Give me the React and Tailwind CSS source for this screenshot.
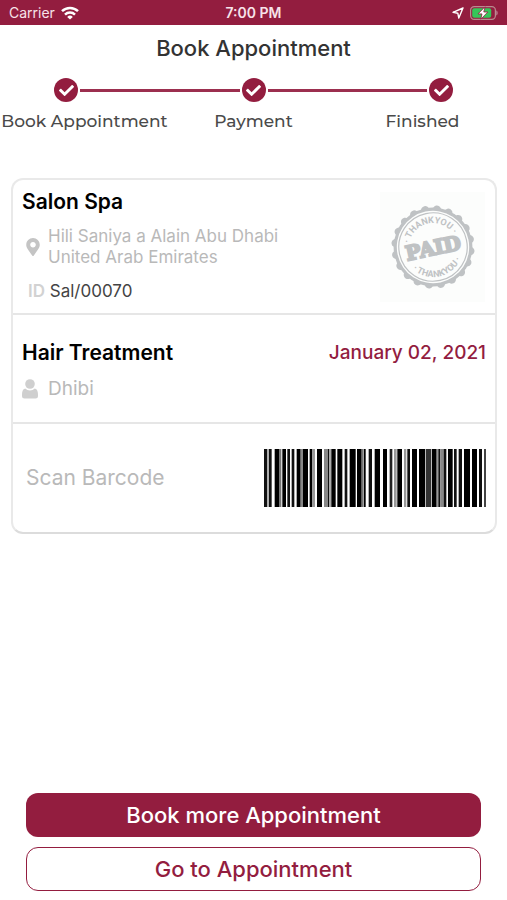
import { Fragment } from 'react'
import { FaCheck, FaMapMarkerAlt } from 'react-icons/fa'

const STEPS = ['Book Appointment', 'Payment', 'Finished']

// [x, width, fill]
const BARS = [
  [0, 10, '#111'], [14, 9, '#111'], [32, 13, '#000'], [45, 7, '#777'], [55, 11, '#000'],
  [70, 8, '#111'], [83, 8, '#111'], [98, 12, '#000'], [110, 7, '#888'], [117, 15, '#000'],
  [137, 8, '#000'], [145, 8, '#999'], [159, 15, '#000'], [180, 12, '#888'], [192, 4, '#111'],
  [196, 6, '#aaa'], [202, 13, '#000'], [220, 15, '#000'], [242, 8, '#111'], [257, 18, '#000'],
  [279, 14, '#000'], [293, 6, '#777'], [300, 5, '#000'], [314, 10, '#111'], [332, 16, '#000'],
  [357, 12, '#000'], [377, 8, '#222'], [390, 8, '#999'], [400, 14, '#000'], [420, 7, '#999'],
  [430, 8, '#111'], [444, 15, '#000'], [465, 18, '#000'], [485, 17, '#333'], [504, 14, '#000'],
  [518, 5, '#999'], [523, 6, '#111'], [529, 10, '#888'], [539, 8, '#111'], [552, 14, '#000'],
  [570, 8, '#111'], [584, 10, '#111'], [600, 18, '#000'], [624, 15, '#000'], [645, 9, '#111'],
  [660, 6, '#444'],
]

function StatusBar() {
  return (
    <div className="h-[25px] px-[9px] bg-[#931d3f] text-[#f7e3e9] grid grid-cols-3 items-center">
      <div className="flex items-center gap-1.5 text-sm">
        <span>Carrier</span>
        <svg className="w-[18px] h-[14px]" viewBox="0 0 18 14" fill="none" stroke="white" strokeWidth="2.5">
          <path d="M1 5.2a11.5 11.5 0 0 1 16 0" />
          <path d="M4 8.6a7.2 7.2 0 0 1 10 0" />
          <path d="M9 13.6L6.2 10.9a4 4 0 0 1 5.6 0z" fill="white" stroke="none" />
        </svg>
      </div>
      <div className="text-center text-sm font-semibold">7:00 PM</div>
      <div className="flex items-center justify-end gap-1.5">
        <svg className="w-3 h-3" viewBox="0 0 12 12" fill="none" stroke="white" strokeWidth="1.4" strokeLinejoin="round">
          <path d="M11 1L1 5.3l4.8 .9L6.8 11z" />
        </svg>
        <svg className="w-7 h-[14px]" viewBox="0 0 28 14">
          <rect x="0.6" y="0.6" width="24.8" height="12.8" rx="3.6" fill="none" stroke="#b98a8f" strokeWidth="1.2" />
          <rect x="2.2" y="2.2" width="19" height="9.6" rx="2" fill="#35c759" />
          <path d="M26.4 4.6c1.6 .6 1.6 4.2 0 4.8z" fill="#c98fa1" />
          <path d="M15 0.800L8 7.900h4l-1.200 5.300 7-7.200h-4z" fill="white" stroke="#931d3f" strokeWidth="0.8" />
        </svg>
      </div>
    </div>
  )
}

function Stepper() {
  return (
    <div>
      <div className="flex items-center gap-0.5 px-[54px]">
        {STEPS.map((step, i) => (
          <Fragment key={step}>
            {i > 0 && <div className="flex-1 h-[3px] bg-[#9c2f4f]" />}
            <div className="w-6 h-6 rounded-full bg-[#931d3f] flex items-center justify-center">
              <FaCheck className="w-[15px] h-[15px] text-white" />
            </div>
          </Fragment>
        ))}
      </div>
      <ol className="grid grid-cols-3 mt-[7px] text-center text-[17px] leading-6 font-medium text-[#4a4a4a] font-['Montserrat','DejaVu_Sans',sans-serif]">
        {STEPS.map((step) => (
          <li key={step} className="whitespace-nowrap">{step}</li>
        ))}
      </ol>
    </div>
  )
}

function PaidStamp() {
  const teeth = Array.from({ length: 20 }, (_, i) => {
    const a = (i * Math.PI) / 10
    return [Math.cos(a) * 37.5, Math.sin(a) * 37.5]
  })

  return (
    <svg className="w-[105px] h-[110px] bg-[#fcfdfc]" viewBox="-53 -55 105 110" role="img" aria-label="Paid">
      <g fill="#bfc2c4" transform="rotate(-12)" textRendering="geometricPrecision">
        {teeth.map(([x, y], i) => (
          <circle key={i} cx={x} cy={y} r="4.2" />
        ))}
        <circle r="39.4" />
        <circle r="36.2" fill="#fcfdfc" />
        <circle r="34.2" fill="none" stroke="#bfc2c4" strokeWidth="1.2" />
        <path id="stamp-top" d="M-24 0A24 24 0 0 1 24 0" fill="none" />
        <path id="stamp-bottom" d="M-30 0A30 30 0 0 0 30 0" fill="none" />
        <g className="font-['Roboto',sans-serif] font-bold text-[9px]" textAnchor="middle">
          <text>
            <textPath href="#stamp-top" startOffset="50%">· THANKYOU ·</textPath>
          </text>
          <text>
            <textPath href="#stamp-bottom" startOffset="50%">· THANKYOU ·</textPath>
          </text>
        </g>
        <text
          className="font-['DejaVu_Serif',serif] font-bold text-[20px]"
          y="8"
          textAnchor="middle"
          stroke="#bfc2c4"
          strokeWidth="2"
        >
          PAID
        </text>
      </g>
    </svg>
  )
}

function Barcode() {
  return (
    <svg className="w-[222px] h-[58px]" viewBox="0 0 666 174" preserveAspectRatio="none" role="img" aria-label="Barcode">
      {BARS.map(([x, width, fill]) => (
        <rect key={x} x={x} y="0" width={width} height="174" fill={fill} />
      ))}
    </svg>
  )
}

function UserIcon() {
  return (
    <svg className="w-4 h-5" viewBox="0 0 16 20" fill="#cfcfcf">
      <circle cx="8" cy="5" r="4.8" />
      <path d="M3.2 9.4a6.8 6.8 0 0 0 9.6 0C15.4 10 16 12.5 16 16v1.2A2.4 2.4 0 0 1 13.6 19.6H2.4A2.4 2.4 0 0 1 0 17.2V16c0-3.5 .6-6 3.2-6.6z" />
    </svg>
  )
}

function AppointmentCard() {
  return (
    <section className="ml-[11px] mr-2.5 border-2 border-[#e9e9e9] border-b-[#dcdcdc] rounded-xl divide-y-2 divide-[#e6e6e6]">
      <div className="h-[135px] flex justify-between pl-[9px] pr-2.5">
        <div>
          <h2 className="mt-2 text-[21px] leading-7 font-semibold text-black">Salon Spa</h2>
          <div className="mt-2.5 flex items-center gap-1.5">
            <FaMapMarkerAlt className="w-[18px] h-[18px] ml-0.5 text-[#c4c4c4]" />
            <address className="not-italic text-[17px] leading-[21px] text-[#b9b9b9]">
              Hili Saniya a Alain Abu Dhabi
              <br />
              United Arab Emirates
            </address>
          </div>
          <p className="mt-[11px] ml-1.5 text-[17px] leading-6 text-[#444]">
            <span className="font-semibold text-[#d2d2d2]">ID</span> Sal/00070
          </p>
        </div>
        <div className="mt-3">
          <PaidStamp />
        </div>
      </div>

      <div className="h-[109px] pt-6 pl-[9px] pr-[9px]">
        <div className="flex items-center justify-between leading-7">
          <h2 className="text-[21px] font-semibold text-black">Hair Treatment</h2>
          <time dateTime="2021-01-02" className="text-[19px] font-medium text-[#931d3f]">January 02, 2021</time>
        </div>
        <div className="mt-2 flex items-center gap-2.5 text-[19px] leading-7 text-[#b9b9b9]">
          <UserIcon />
          <span>Dhibi</span>
        </div>
      </div>

      <div className="h-[108px] flex items-center justify-between pl-[13px] pr-[9px]">
        <span className="text-[21px] text-[#b9b9b9]">Scan Barcode</span>
        <Barcode />
      </div>
    </section>
  )
}

export default function App() {
  return (
    <div className="min-h-screen flex flex-col bg-white font-['Inter',sans-serif]">
      <StatusBar />
      <h1 className="mt-2 mb-[15px] text-center text-[22px] leading-[30px] font-medium text-[#333]">Book Appointment</h1>
      <Stepper />
      <main className="mt-[45px] flex-1">
        <AppointmentCard />
      </main>
      <div className="px-[26px] pb-[9px] flex flex-col gap-2.5">
        <button type="button" className="h-11 rounded-xl bg-[#931d3f] text-white text-[22px] font-medium">
          Book more Appointment
        </button>
        <button type="button" className="h-11 rounded-xl border border-[#931d3f] bg-white text-[#931d3f] text-[22px] font-medium">
          Go to Appointment
        </button>
      </div>
    </div>
  )
}
